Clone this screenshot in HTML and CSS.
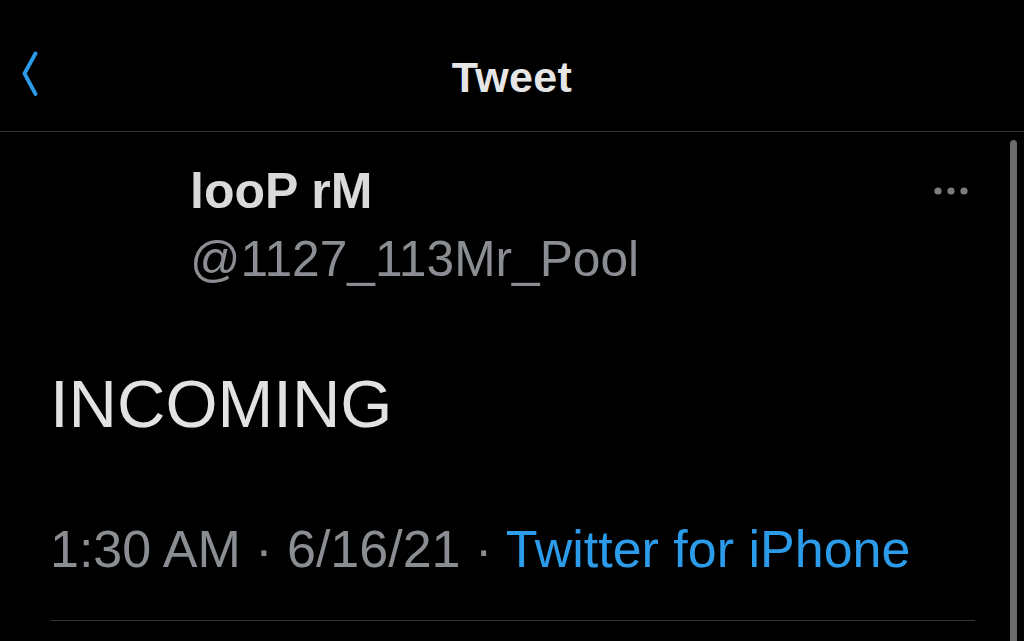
FILE: index.html
```html
<!DOCTYPE html>
<html>
<head>
<meta charset="utf-8">
<link rel="stylesheet" href="styles.css">
</head>
<body>
<div class="screen">
  <header class="topbar">
    <div class="back">
      <svg width="18" height="46" viewBox="0 0 18 46"><polyline points="13.5,2.5 2.5,22.5 13.5,43" fill="none" stroke="#2b9bea" stroke-width="3.8" stroke-linecap="round" stroke-linejoin="round"/></svg>
    </div>
    <div class="title">Tweet</div>
    <div class="spacer"></div>
  </header>
  <main class="tweet">
    <div class="author">
      <div class="avatar"></div>
      <div class="names">
        <div class="name">looP rM</div>
        <div class="handle">@1127_113Mr_Pool</div>
      </div>
      <div class="more">
        <svg width="34" height="10" viewBox="0 0 34 10"><circle cx="4" cy="5" r="3.6" fill="#7c7c7c"/><circle cx="17" cy="5" r="3.6" fill="#7c7c7c"/><circle cx="30" cy="5" r="3.6" fill="#7c7c7c"/></svg>
      </div>
    </div>
    <div class="text">INCOMING</div>
    <div class="meta">1:30 AM · 6/16/21 · <span class="source">Twitter for iPhone</span></div>
    <div class="divider"></div>
  </main>
  <div class="scrollbar"></div>
</div>
</body>
</html>
```

FILE: styles.css
```css
html, body {
  margin: 0;
  padding: 0;
  background: #000;
}
body {
  font-family: "Liberation Sans", Arial, sans-serif;
  width: 1024px;
  height: 641px;
  overflow: hidden;
}
.screen {
  position: relative;
  width: 1024px;
  height: 641px;
  background: #000;
}
.topbar {
  display: grid;
  grid-template-columns: 1fr auto 1fr;
  align-items: start;
  height: 132px;
  box-sizing: border-box;
  border-bottom: 1px solid #2f3133;
}
.back {
  margin-top: 51px;
  margin-left: 22px;
  height: 46px;
}
.back svg { display: block; }
.title {
  margin-top: 56px;
  font-size: 43px;
  line-height: 43px;
  font-weight: 700;
  color: #e6e6e6;
  letter-spacing: 0.4px;
}
.tweet {
  padding-top: 25px;
}
.author {
  display: flex;
  align-items: flex-start;
}
.avatar {
  width: 120px;
  height: 120px;
  margin-left: 50px;
  margin-right: 20px;
  background: #000;
}
.names {
  flex: 1;
}
.name {
  font-size: 50px;
  line-height: 68px;
  font-weight: 700;
  color: #dadada;
}
.handle {
  font-size: 49.7px;
  line-height: 68px;
  color: #8a8d91;
}
.more {
  margin-top: 29px;
  margin-right: 56px;
}
.more svg { display: block; }
.text {
  margin-top: 77px;
  margin-left: 50px;
  font-size: 67px;
  line-height: 67px;
  color: #e2e2e2;
}
.meta {
  margin-top: 86px;
  margin-left: 50px;
  font-size: 52px;
  line-height: 52px;
  color: #8a8d91;
  white-space: nowrap;
}
.source {
  color: #2b9bea;
}
.divider {
  margin-top: 45px;
  margin-left: 50px;
  width: 925px;
  height: 1px;
  background: #333538;
}
.scrollbar {
  position: absolute;
  right: 7px;
  top: 140px;
  bottom: -10px;
  width: 7px;
  border-radius: 4px;
  background: #6b6b6b;
}
```
